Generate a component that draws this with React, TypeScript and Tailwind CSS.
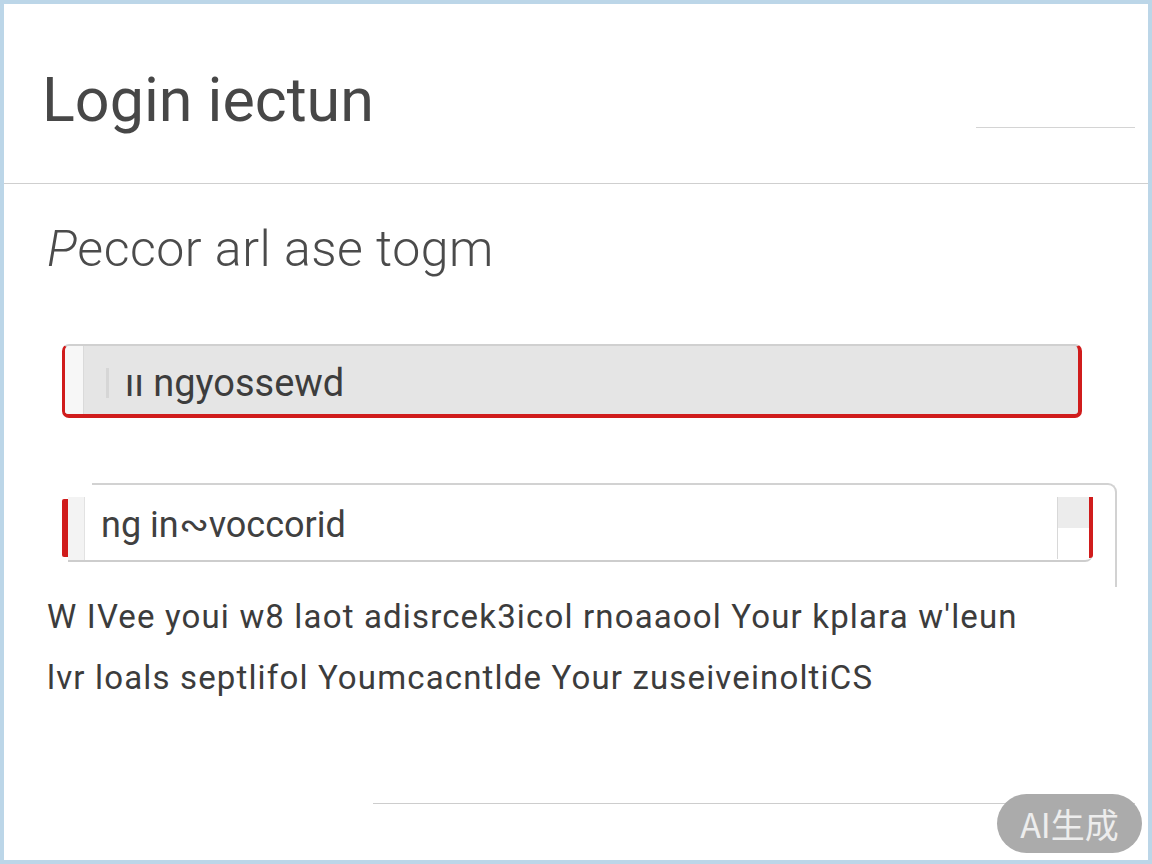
import React from 'react';

const RED = 'bg-[#d01c1c]';

const App: React.FC = () => {
  return (
    <div className="relative w-[1152px] h-[864px] border-4 border-[#bcd6e8] bg-white text-[#454545] font-[Roboto,'Liberation_Sans',sans-serif] overflow-hidden">
      {/* Header */}
      <div className="h-[180px] flex justify-between border-b border-[#cfcfcf] pt-[66px]">
        <h1 className="pl-[38px] text-[61px] leading-none text-[#474747]">Login iectun</h1>
        <div className="w-[159px] h-px bg-[#d4d4d4] mt-[57px] mr-[13px]" />
      </div>

      {/* Subtitle */}
      <h2 className="mt-[40px] pl-[43px] text-[50px] leading-none font-light tracking-[0.01em] text-[#4b4b4b]">
        <span className="italic">P</span>eccor arl ase togm
      </h2>

      {/* Input 1 */}
      <div className="mt-[70px] ml-[58px] w-[1020px] h-[74px] flex rounded-[7px] border-t-2 border-l-[3px] border-r-[4px] border-b-[4px] border-t-[#d0d0d0] border-l-[#d01c1c] border-r-[#d01c1c] border-b-[#d01c1c] bg-[#e5e5e5] overflow-hidden">
        <div className="w-[19px] bg-[#f7f7f7] border-r border-[#dadada]" />
        <div className="flex items-center pl-[22px] pt-[6px] text-[38px] text-[#3d3d3d]">
          <span className="w-[3px] h-[30px] bg-[#d6d6d6] mr-[16px]" />
          <span>ıı ngyossewd</span>
        </div>
      </div>

      {/* Input 2 */}
      <div className="mt-[65px] ml-[58px] w-[1055px] grid">
        <div className="[grid-area:1/1] ml-[30px] h-[104px] border-t-2 border-r-2 border-[#d2d2d2] rounded-tr-[9px]" />
        <div className="[grid-area:1/1] mt-[14px] h-[65px] w-[1031px] flex">
          <div className={`w-[6px] mt-[2px] mb-[5px] rounded-l-[2px] ${RED}`} />
          <div className="flex-1 flex border-b-2 border-[#cdcdcd] rounded-br-[8px] bg-white">
            <div className="w-[17px] bg-[#f3f3f3] border-r border-[#e2e2e2]" />
            <div className="flex-1 flex items-center pl-[16px] pb-[7px] text-[36px] text-[#404040]">
              ng in∾voccorid
            </div>
            <div className="w-[32px] flex flex-col border-l border-[#d8d8d8] mb-[1px]">
              <div className="h-[31px] bg-[#ececec]" />
              <div className="flex-1 bg-white" />
            </div>
            <div className={`w-[4px] mb-[2px] rounded-br-[3px] ${RED}`} />
          </div>
        </div>
      </div>

      {/* Paragraph */}
      <div className="mt-[-1px] pl-[43px] text-[33px] leading-[61px] tracking-[0.035em] text-[#3c3c3c] whitespace-nowrap">
        <p>W IVee youi w8 laot adisrcek3icol rnoaaool Your kplara w'leun</p>
        <p>lvr loals septlifol Youmcacntlde Your zuseiveinoltiCS</p>
      </div>

      {/* Footer line */}
      <div className="mt-[95px] ml-[369px] mr-[13px] h-px bg-[#cdcdcd]" />

      <div className="absolute right-[6px] bottom-[7px] w-[145px] h-[59px] rounded-full bg-[#ababab] flex items-center justify-center text-[34px] text-[#ededed] font-['Noto_Sans_CJK_SC',sans-serif]">
        AI生成
      </div>
    </div>
  );
};

export default App;
